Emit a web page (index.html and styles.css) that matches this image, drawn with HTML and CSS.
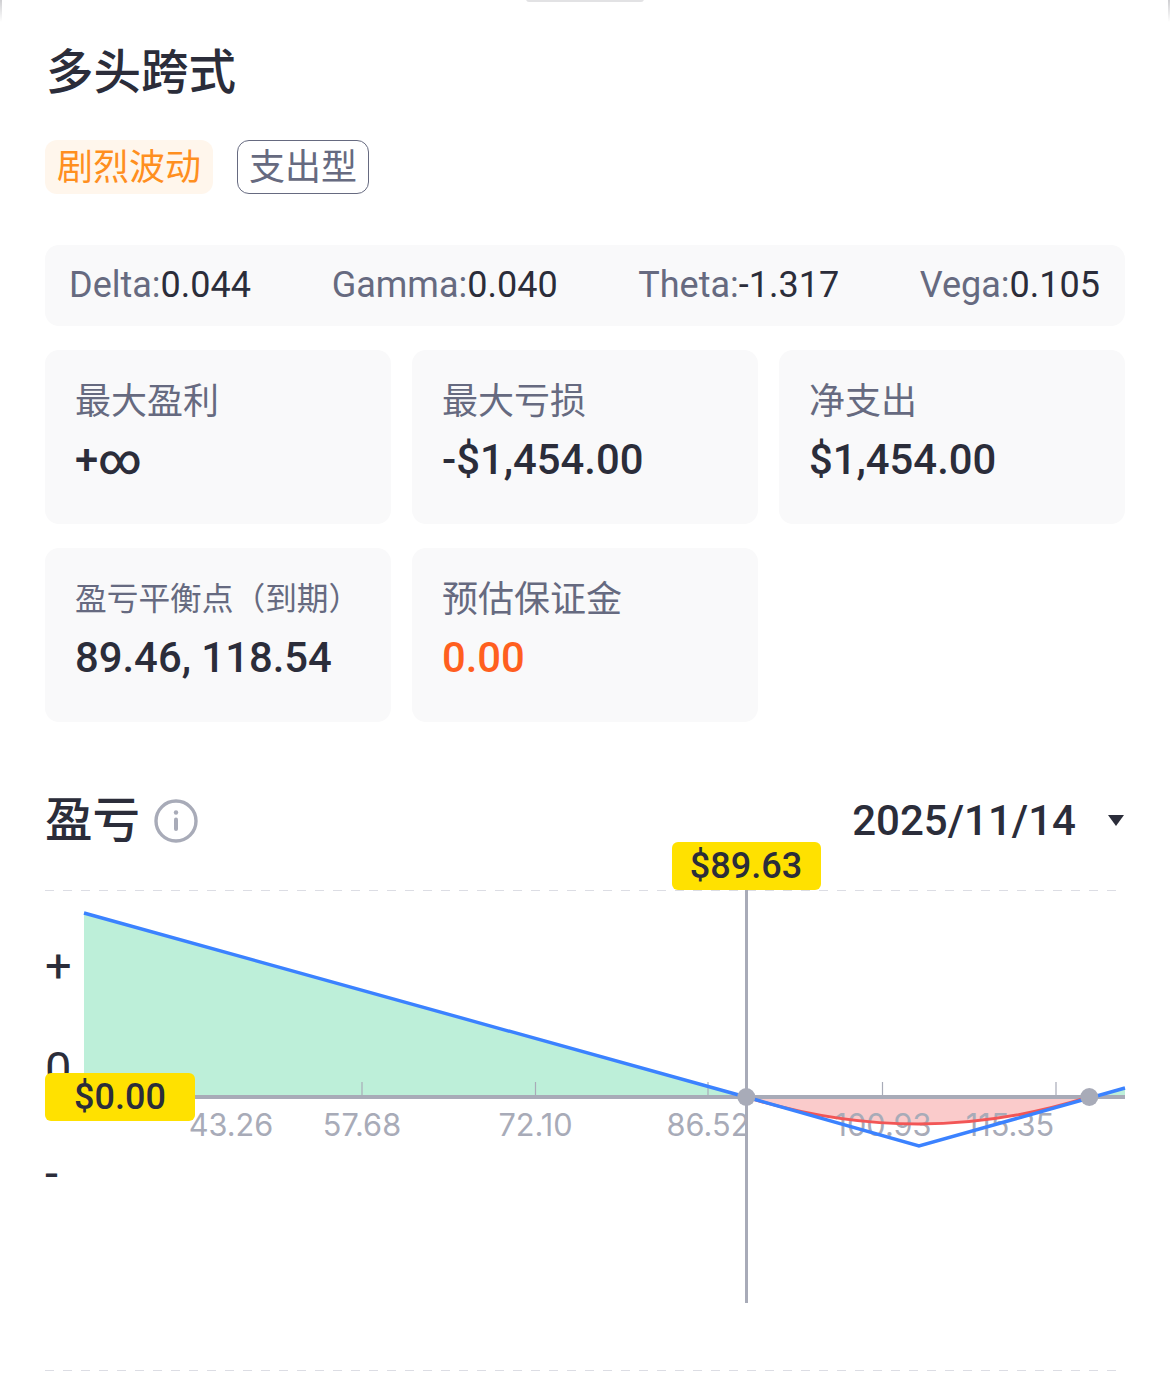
FILE: index.html
```html
<!DOCTYPE html>
<html lang="zh">
<head>
<meta charset="utf-8">
<title>多头跨式</title>
<link rel="stylesheet" href="styles.css">
</head>
<body>
<div class="sheet">
  <div class="handle"></div>
  <h1 class="title">多头跨式</h1>
  <div class="tags">
    <span class="tag tag-hot">剧烈波动</span>
    <span class="tag tag-line">支出型</span>
  </div>
  <div class="greeks">
    <span class="greek">Delta:<b>0.044</b></span>
    <span class="greek">Gamma:<b>0.040</b></span>
    <span class="greek">Theta:<b>-1.317</b></span>
    <span class="greek">Vega:<b>0.105</b></span>
  </div>
  <div class="stats">
    <div class="stat"><div class="stat-label">最大盈利</div><div class="stat-value">+∞</div></div>
    <div class="stat"><div class="stat-label">最大亏损</div><div class="stat-value">-$1,454.00</div></div>
    <div class="stat"><div class="stat-label">净支出</div><div class="stat-value">$1,454.00</div></div>
    <div class="stat"><div class="stat-label stat-label-small">盈亏平衡点（到期）</div><div class="stat-value">89.46, 118.54</div></div>
    <div class="stat"><div class="stat-label">预估保证金</div><div class="stat-value stat-value-warn">0.00</div></div>
  </div>
  <div class="pl-head">
    <div class="pl-title">
      <h2>盈亏</h2>
      <svg class="info" viewBox="0 0 44 44" width="44" height="44" aria-hidden="true">
        <circle cx="22" cy="22" r="20" fill="none" stroke="#a8abb8" stroke-width="3.4"/>
        <circle cx="22" cy="13.5" r="2.2" fill="#a8abb8"/>
        <rect x="20" y="18.5" width="4" height="13.5" rx="2" fill="#a8abb8"/>
      </svg>
    </div>
    <div class="date">2025/11/14<span class="caret"></span></div>
  </div>
  <div class="chart">
    <svg class="plot" viewBox="0 0 1080 520" width="1080" height="520">
      <line x1="0" y1="46.5" x2="1072" y2="46.5" class="grid"/>
      <line x1="0" y1="526.5" x2="1072" y2="526.5" class="grid"/>
      <polygon points="39,69 701,253 39,253" class="fill-profit"/>
      <path d="M701 253Q874 307 1044 253Z" class="fill-loss"/>
      <polygon points="1044,253 1080,243 1080,253" class="fill-profit"/>
      <path d="M317 253V238M490.500 253V238M663 253V238M837.500 253V238M1011 253V238" class="tick"/>
      <line x1="0" y1="253" x2="1080" y2="253" class="axis"/>
      <text x="186" y="292" class="x-label" text-anchor="middle">43.26</text>
      <text x="317" y="292" class="x-label" text-anchor="middle">57.68</text>
      <text x="490.500" y="292" class="x-label" text-anchor="middle">72.10</text>
      <text x="663" y="292" class="x-label" text-anchor="middle">86.52</text>
      <text x="838" y="292" class="x-label" text-anchor="middle">100.93</text>
      <text x="965" y="292" class="x-label" text-anchor="middle">115.35</text>
      <path d="M701 253Q874 307 1044 253" class="line-red"/>
      <path d="M39 69L701 253L874 302L1080 244" class="line-blue"/>
      <line x1="701.500" y1="46" x2="701.500" y2="459" class="cursor"/>
      <circle cx="701.300" cy="253" r="9" class="dot"/>
      <circle cx="1044.300" cy="253" r="9" class="dot"/>
      <text x="0" y="138" class="y-label">+</text>
      <text x="0" y="241" class="y-label">0</text>
      <text x="0" y="345" class="y-label">-</text>
    </svg>
    <div class="marker marker-x">$89.63</div>
    <div class="marker marker-y">$0.00</div>
  </div>
</div>
</body>
</html>
```
FILE: styles.css
```css
* { box-sizing: border-box; }
html, body { margin: 0; padding: 0; background: #fff; }
body {
  font-family: Roboto, "Noto Sans CJK SC", sans-serif;
  color: #2b2d3a;
  width: 1170px;
  height: 1400px;
  overflow: hidden;
}
.sheet { position: relative; padding: 46px 45px 0; }
.sheet::before, .sheet::after {
  content: ""; position: absolute; top: 0; width: 2px; height: 22px;
  background: linear-gradient(#cfcfd2, #fff);
}
.sheet::before { left: 0; }
.sheet::after { right: 0; }
.handle {
  position: absolute; top: -4px; left: 526px;
  width: 118px; height: 6px; border-radius: 3px; background: #e2e2e4;
}
.title { margin: 0; font-size: 47.500px; line-height: 54px; font-weight: 500; padding-left: 1px; }
.tags { display: flex; gap: 24px; margin-top: 40px; }
.tag { height: 54px; font-size: 36px; border-radius: 12px; }
.tag-hot { width: 168px; line-height: 57px; text-align: center; color: #ff8f1f; background: #fff6ec; }
.tag-line { width: 132px; line-height: 55px; text-align: center; color: #666a80; border: 1px solid #666a80; }
.greeks {
  display: flex; justify-content: space-between; align-items: center;
  height: 81px; margin-top: 51px; padding: 0 25px 2px 24px; border-radius: 14px;
  background: #f9f9fa; font-size: 36px; color: #666a80;
}
.greek b { font-weight: 400; color: #2b2d3a; }
.stats { display: grid; grid-template-columns: repeat(3, 346px); gap: 24px 21px; margin-top: 24px; }
.stat { height: 174px; padding: 28px 30px 0; border-radius: 14px; background: #f9f9fa; }
.stat-label { font-size: 36px; line-height: 48px; color: #666a80; }
.stat-label-small { font-size: 31.700px; }
.stat-value { margin-top: 8px; font-size: 41.800px; line-height: 52px; font-weight: 500; }
.stat-value-warn { color: #ff5f1f; }
.pl-head { display: flex; justify-content: space-between; align-items: center; height: 60px; margin-top: 69px; margin-bottom: -7px; }
.pl-title { display: flex; align-items: center; gap: 14px; }
.pl-title h2 { margin: 0; font-size: 47.500px; line-height: 60px; font-weight: 500; }
.info { display: block; }
.date { display: flex; align-items: center; font-size: 42px; font-weight: 500; padding-bottom: 2px; }
.caret {
  width: 0; height: 0; margin-left: 32px; margin-right: 1px;
  border-left: 8px solid transparent; border-right: 8px solid transparent; border-top: 11px solid #2b2d3a;
}
.chart { position: relative; height: 520px; }
.plot { display: block; overflow: visible; }
.grid { stroke: #dcdde4; stroke-width: 1; stroke-dasharray: 9 9; }
.fill-profit { fill: #bdefd9; }
.fill-loss { fill: #facbcb; }
.tick { stroke: #a8abb8; stroke-width: 1.200; fill: none; }
.axis { stroke: #a8abb8; stroke-width: 4; }
.x-label { font-size: 30.700px; fill: #a8abb8; font-family: Inter, sans-serif; }
.y-label { font-size: 47px; fill: #2b2d3a; font-family: Roboto, sans-serif; font-weight: 400; }
.line-red { stroke: #f25656; stroke-width: 3; fill: none; }
.line-blue { stroke: #3b82ff; stroke-width: 3.400; fill: none; }
.cursor { stroke: #a8abb8; stroke-width: 3; }
.dot { fill: #a8abb8; }
.marker {
  position: absolute; height: 48px; line-height: 48px; text-align: center;
  font-size: 36px; font-weight: 500; background: #ffe100; border-radius: 6px;
}
.marker-x { left: 627px; top: -2px; width: 149px; padding-right: 1px; }
.marker-y { left: 0; top: 229px; width: 150px; }
```
